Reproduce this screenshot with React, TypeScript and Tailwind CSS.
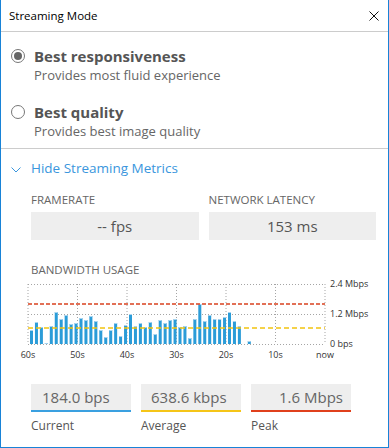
import React from "react";

const font = { fontFamily: '"Open Sans", "Noto Sans", sans-serif' };

// bar heights in px (chart is 60px tall = 2.4 Mbps)
const bars = [
  14, 22, 17, 1, 18, 32, 25, 29, 20, 21, 26, 24, 28, 23, 14, 7, 14, 21, 8, 19,
  30, 18, 21, 17, 22, 10, 24, 21, 24, 25, 17, 18, 6, 25, 40, 23, 29, 25, 25, 27,
  32, 23, 18, 0, 3,
];

const gridX = [28, 77.5, 127, 176.5, 226, 275.5, 325];
const xLabels = ["60s", "50s", "40s", "30s", "20s", "10s", "now"];

function Radio({ checked }: { checked?: boolean }) {
  return (
    <span className="w-[14px] h-[14px] rounded-full border border-[#777] flex items-center justify-center shrink-0">
      {checked && <span className="w-[8px] h-[8px] rounded-full bg-[#666]" />}
    </span>
  );
}

function Option({
  title,
  desc,
  checked,
}: {
  title: string;
  desc: string;
  checked?: boolean;
}) {
  return (
    <div className="flex">
      <div className="h-[20px] flex items-center">
        <Radio checked={checked} />
      </div>
      <div className="ml-[9px]">
        <div className="text-[15px] leading-[20px] font-bold text-[#555]">{title}</div>
        <div className="text-[13px] leading-[18px] text-[#666]">{desc}</div>
      </div>
    </div>
  );
}

function BandwidthChart() {
  const bottom = 344;
  return (
    <svg width={387} height={84} viewBox="1 278 387 84" className="block">
      {gridX.map((x) => (
        <line key={x} x1={x} y1={284} x2={x} y2={344} stroke="#a5a5a5" strokeDasharray="1 2" />
      ))}
      {[284, 314, 344].map((y) => (
        <line key={y} x1={28} y1={y + 0.5} x2={325} y2={y + 0.5} stroke="#a5a5a5" strokeDasharray="1 2" />
      ))}
      {bars.map((h, i) =>
        h > 0 ? (
          <g key={i}>
            <rect x={30 + i * 4.95} y={bottom - h} width={3} height={h} fill="#2b9cd8" />
            <rect x={30 + i * 4.95} y={bottom - h} width={3} height={1} fill="#a8d3ef" />
          </g>
        ) : null
      )}
      <line x1={28} y1={304} x2={325} y2={304} stroke="#d9421f" strokeWidth={1.5} strokeDasharray="4 2" />
      <line x1={28} y1={328} x2={325} y2={328} stroke="#f2c30f" strokeWidth={1.5} strokeDasharray="5 3" />
      <g fontSize={9} fill="#333" style={font}>
        <text x={330} y={287}>2.4 Mbps</text>
        <text x={330} y={317}>1.2 Mbps</text>
        <text x={330} y={347}>0 bps</text>
        {xLabels.map((l, i) => (
          <text key={l} x={gridX[i]} y={358} textAnchor="middle">
            {l}
          </text>
        ))}
      </g>
    </svg>
  );
}

function Stat({
  value,
  label,
  color,
  pad,
}: {
  value: string;
  label: string;
  color: string;
  pad: string;
}) {
  return (
    <div className="w-[100px]">
      <div className={`h-[28px] bg-[#eeeeee] border-b-2 ${color} ${pad} flex items-center text-[15px] text-[#666]`}>
        {value}
      </div>
      <div className="mt-[6px] text-[12px] leading-[16px] text-[#555]">{label}</div>
    </div>
  );
}

export default function App() {
  return (
    <div
      className="w-[389px] h-[448px] bg-white border-x border-b border-[#1883d7] overflow-hidden"
      style={font}
    >
      <div className="h-[32px] border-b border-[#cccccc] flex items-center justify-between pl-[8px] pr-[9px]">
        <span className="text-[11.5px] text-black">Streaming Mode</span>
        <svg width="10" height="10" viewBox="0 0 10 10">
          <path d="M0.5 0.5 L9.5 9.5 M9.5 0.5 L0.5 9.5" stroke="#111" strokeWidth="1" />
        </svg>
      </div>

      <div className="h-[117px] border-b border-[#cccccc] pl-[10px] pt-[14px] flex flex-col gap-[18px]">
        <Option title="Best responsiveness" desc="Provides most fluid experience" checked />
        <Option title="Best quality" desc="Provides best image quality" />
      </div>

      <div className="pt-[9px] pl-[10px] flex items-center h-[29px]">
        <svg width="10" height="6" viewBox="0 0 10 6" className="mt-[3px]">
          <path d="M0.5 0.5 L5 5 L9.5 0.5" stroke="#3a96dd" fill="none" strokeWidth="1" />
        </svg>
        <span className="ml-[10px] text-[13.5px] leading-[20px] text-[#3a96dd]">Hide Streaming Metrics</span>
      </div>

      <div className="pl-[30px] pr-[12px]">
        <div className="mt-[14px] flex gap-[10px]">
          <div className="w-[168px]">
            <div className="text-[11.5px] leading-[16px] text-[#666] uppercase">Framerate</div>
            <div className="mt-[4px] h-[28px] bg-[#eeeeee] flex items-center justify-center text-[15px] text-[#555]">
              -- fps
            </div>
          </div>
          <div className="w-[168px]">
            <div className="text-[11.5px] leading-[16px] text-[#666] uppercase">Network Latency</div>
            <div className="mt-[4px] h-[28px] bg-[#eeeeee] flex items-center justify-center text-[15px] text-[#555]">
              153 ms
            </div>
          </div>
        </div>
        <div className="mt-[22px] text-[11.5px] leading-[16px] text-[#666] uppercase">Bandwidth Usage</div>
      </div>

      <BandwidthChart />

      <div className="mt-[22px] pl-[30px] flex gap-[10px]">
        <Stat value="184.0 bps" label="Current" color="border-[#3aa0e0]" pad="pl-[11px]" />
        <Stat value="638.6 kbps" label="Average" color="border-[#f5c518]" pad="pl-[10px]" />
        <Stat value="1.6 Mbps" label="Peak" color="border-[#e0401c]" pad="pl-[28px]" />
      </div>
    </div>
  );
}
